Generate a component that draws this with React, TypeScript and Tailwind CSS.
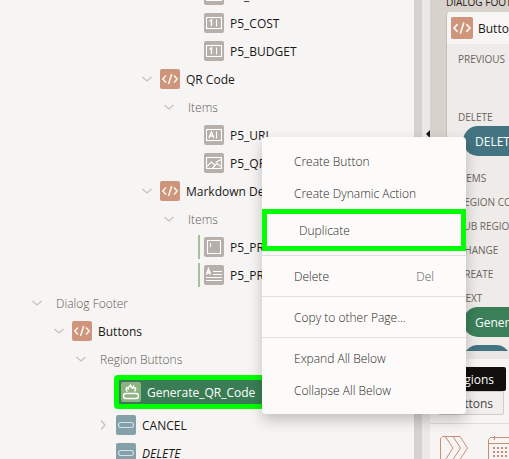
import React from "react";

type IconKind = "number" | "text" | "image" | "area" | "rich" | "region" | "hot" | "button";

const tile: Record<IconKind, string> = {
  number: "bg-[#b6afaa]",
  text: "bg-[#b6afaa]",
  image: "bg-[#b6afaa]",
  area: "bg-[#b6afaa]",
  rich: "bg-[#b6afaa]",
  region: "bg-[#cd957b]",
  hot: "bg-[#8fb283]",
  button: "bg-[#86a0aa]",
};

function Glyph({ kind }: { kind: IconKind }) {
  const frame = <rect x="2.5" y="4.5" width="15" height="11" />;
  return (
    <svg viewBox="0 0 20 20" className="size-full" fill="none" stroke="#fff" strokeWidth="1.1">
      {kind === "number" && <>{frame}<path d="M5.5 8.2l2-1.4V13" strokeWidth="1.4" /><path d="M12.5 6.5v7" /></>}
      {kind === "text" && <>{frame}<path d="M5 13l2.5-6L10 13M5.8 11h3.4" strokeWidth="1.4" /><path d="M12.5 6.5v7" /></>}
      {kind === "image" && <>{frame}<path d="M3 13.5L7.5 9l3.5 3.5 2-2 4 3M11.5 9.5L17 6.5M8.5 15l2.5-2.5" /></>}
      {kind === "area" && <><rect x="3.5" y="3.5" width="13" height="13" /><path d="M6.5 6v4" /></>}
      {kind === "rich" && <><path d="M2.5 9.5l2-5.5 2 5.5M3.3 7.8h2.6" strokeWidth="1.5" /><path d="M9 6.5h9M9 9.5h9M2 12.5h16M2 15.5h16" /></>}
      {kind === "region" && <path d="M6 6.5L2.8 10 6 13.5M14 6.5l3.2 3.5-3.2 3.5M11.7 5L8.5 15" stroke="#fdf3ec" strokeWidth="1.6" />}
      {kind === "hot" && <><rect x="2.5" y="11.5" width="15" height="5" rx="2.5" strokeWidth="1.4" /><path d="M6.5 9.5C4.8 8.5 5 6.5 5.8 5.5l1.4 1.3C7.5 5 8.3 4 9.5 3c.2 1.5.8 2.3 1.7 3.2L12.5 4.5c.2 1 .5 1.5 1.2 2L14.5 6c.5 1.5 0 2.8-1 3.5" strokeWidth="1.4" /></>}
      {kind === "button" && <rect x="2.5" y="7.5" width="15" height="5" rx="2.5" stroke="#cfe3ea" />}
    </svg>
  );
}

function Tile({ kind, big = false }: { kind: IconKind; big?: boolean }) {
  return (
    <span className={`${big ? "size-[22px]" : "size-5"} shrink-0 rounded-xs ${tile[kind]}`}>
      <Glyph kind={kind} />
    </span>
  );
}

function Chevron({ closed = false }: { closed?: boolean }) {
  return (
    <svg viewBox="0 0 12 12" className="size-3 shrink-0" fill="none" stroke="#c4c0bc" strokeWidth="1.2">
      <path d={closed ? "M4 1.5L8 6l-4 4.5" : "M1.5 4L6 8l4.5-4"} />
    </svg>
  );
}

function Item({ kind, label, marked = false }: { kind: IconKind; label: string; marked?: boolean }) {
  return (
    <li className="flex h-7 items-center pl-[198px]">
      <span className={`mr-1 h-6 w-0.5 ${marked ? "bg-[#a4c19c]" : ""}`} />
      <Tile kind={kind} />
      <span className="ml-1.5 pt-0.5">{label}</span>
    </li>
  );
}

function Region({ label, indent }: { label: string; indent: string }) {
  return (
    <li className={`flex h-7 items-center ${indent}`}>
      <Chevron />
      <span className="ml-[7px] flex"><Tile kind="region" /></span>
      <span className="ml-1.5 pt-0.5">{label}</span>
    </li>
  );
}

function Group({ label, indent }: { label: string; indent: string }) {
  return (
    <li className={`flex h-7 items-center font-light text-[#5f5955] ${indent}`}>
      <Chevron />
      <span className="ml-[13px] pt-0.5">{label}</span>
    </li>
  );
}

function MenuItem({ label, hint }: { label: string; hint?: string }) {
  return (
    <button type="button" role="menuitem" className="flex h-8 w-full items-center justify-between px-8 pt-0.5 text-left">
      <span>{label}</span>
      {hint && <span className="text-[#5f5955]">{hint}</span>}
    </button>
  );
}

function Slot({ label }: { label: string }) {
  return <div className="h-6 pl-[11px] text-[10px] leading-6 text-[#6b6561]">{label}</div>;
}

export default function App() {
  return (
    <main className="relative flex h-screen overflow-hidden bg-[#f6f5f4] font-['Open_Sans','Noto_Sans',sans-serif] text-xs whitespace-nowrap text-[#1b1816]">
      <ul className="-mt-[19px] min-w-0 flex-1">
        <Item kind="number" label="P5_NAME" />
        <Item kind="number" label="P5_COST" />
        <Item kind="number" label="P5_BUDGET" />
        <Region label="QR Code" indent="pl-[141px]" />
        <Group label="Items" indent="pl-[163px]" />
        <Item kind="text" label="P5_URL" />
        <Item kind="image" label="P5_QR" />
        <Region label="Markdown Details" indent="pl-[141px]" />
        <Group label="Items" indent="pl-[163px]" />
        <Item kind="area" label="P5_PROMPT" marked />
        <Item kind="rich" label="P5_PRE" marked />
        <Group label="Dialog Footer" indent="pl-[31px]" />
        <Region label="Buttons" indent="pl-[53px]" />
        <Group label="Region Buttons" indent="pl-[75px]" />
        <li className="my-0.5 ml-[114px] flex h-[34px] items-center rounded-sm border-5 border-[#00ff00] bg-[#3a7d54] pl-0.5 font-medium text-white">
          <Tile kind="hot" />
          <span className="ml-1.5 pt-0.5">Generate_QR_Code</span>
        </li>
        <li className="flex h-7 items-center pl-[97px]">
          <Chevron closed />
          <span className="ml-[7px] flex"><Tile kind="button" /></span>
          <span className="ml-1.5 pt-0.5">CANCEL</span>
        </li>
        <li className="flex h-7 items-center pl-[116px] italic">
          <Tile kind="button" />
          <span className="ml-1.5 pt-0.5">DELETE</span>
        </li>
      </ul>

      <div className="w-2 shrink-0 bg-[#d4d3d1]" />
      <div className="flex w-2 shrink-0 items-start justify-end bg-[#ebe8e6] pt-[130px]">
        <svg viewBox="0 0 4 8" className="h-2 w-1"><path d="M4 0v8L0 4z" fill="#161513" /></svg>
      </div>

      <section className="flex w-[79px] shrink-0 flex-col overflow-hidden bg-[#d8d2cd]">
        <h2 className="-mt-1.5 ml-4 h-[18px] shrink-0 text-[10px] leading-4">DIALOG FOOTER</h2>
        <div className="ml-4 h-[339px] w-40 shrink-0 overflow-hidden rounded-tl-sm border-l border-[#c5bfb9] bg-[#eeebe8]">
          <div className="flex h-8 items-center gap-[5px] bg-[#f7f6f5] pl-1">
            <Tile kind="region" big />
            <span className="pt-0.5">Buttons</span>
          </div>
          <div className="pt-[3px]">
            <Slot label="PREVIOUS" />
            <div className="h-[34px]" />
            <Slot label="DELETE" />
            <button type="button" className="my-[-3px] ml-4 block h-[30px] rounded-full bg-[#437481] px-3 pt-0.5 font-medium text-white">DELETE</button>
            <div className="h-[13px]" />
            <Slot label="ITEMS" />
            <Slot label="REGION CONTENT" />
            <Slot label="SUB REGIONS" />
            <Slot label="CHANGE" />
            <Slot label="CREATE" />
            <Slot label="NEXT" />
            <button type="button" className="my-[-3px] ml-4 block h-[30px] rounded-full bg-[#3a7f57] px-3 pt-0.5 font-medium text-white">Generate_QR_Code</button>
            <div className="mt-[11px] ml-4 h-[30px] w-12 rounded-full bg-[#437481]" />
          </div>
        </div>
        <div className="h-2 shrink-0 bg-[#e9e6e3]" />
        <div className="min-h-0 flex-1 bg-[#f6f5f4] pt-2">
          <div className="ml-2 flex flex-col">
            <button type="button" className="h-6 w-[68px] rounded-xs bg-[#100f0e] pt-0.5 text-white">Regions</button>
            <button type="button" className="h-6 w-[66px] rounded-xs border border-[#d0ccc9] bg-[#f1efed] pt-0.5 text-[#4b4643]">Buttons</button>
          </div>
          <div className="mt-2 border-t border-[#dedbd8] pt-3">
            <svg viewBox="0 0 79 23" className="h-[23px] w-[79px]" fill="none" stroke="#c98d75">
              <path d="M10.5 23V2.5l2-2H23L30.5 12 23 23.5M15.500 1L23 12 15.500 23.500M22.500.5H30L37.500 12 30 23.500" />
              <path d="M58.5 23V3.5l2-2H79M58.5 7.5H79M64.5 0v4" />
              <path d="M63 12h16M63 16h16M63 20h16" strokeWidth="2" strokeDasharray="2 2" />
            </svg>
          </div>
        </div>
      </section>

      <div role="menu" className="absolute top-[137px] left-[262px] w-[204px] rounded-sm bg-[#fcfbfa] py-2 font-light text-[#2b2826] shadow-[0_6px_14px_rgba(0,0,0,0.22)]">
        <MenuItem label="Create Button" />
        <MenuItem label="Create Dynamic Action" />
        <button type="button" role="menuitem" className="flex h-[42px] w-full items-center border-5 border-[#00ff00] pt-0.5 pl-8">Duplicate</button>
        <hr className="my-1 border-[#e2e0de]" />
        <MenuItem label="Delete" hint="Del" />
        <hr className="my-1 border-[#e2e0de]" />
        <MenuItem label="Copy to other Page..." />
        <hr className="my-1 border-[#e2e0de]" />
        <MenuItem label="Expand All Below" />
        <MenuItem label="Collapse All Below" />
      </div>
    </main>
  );
}
